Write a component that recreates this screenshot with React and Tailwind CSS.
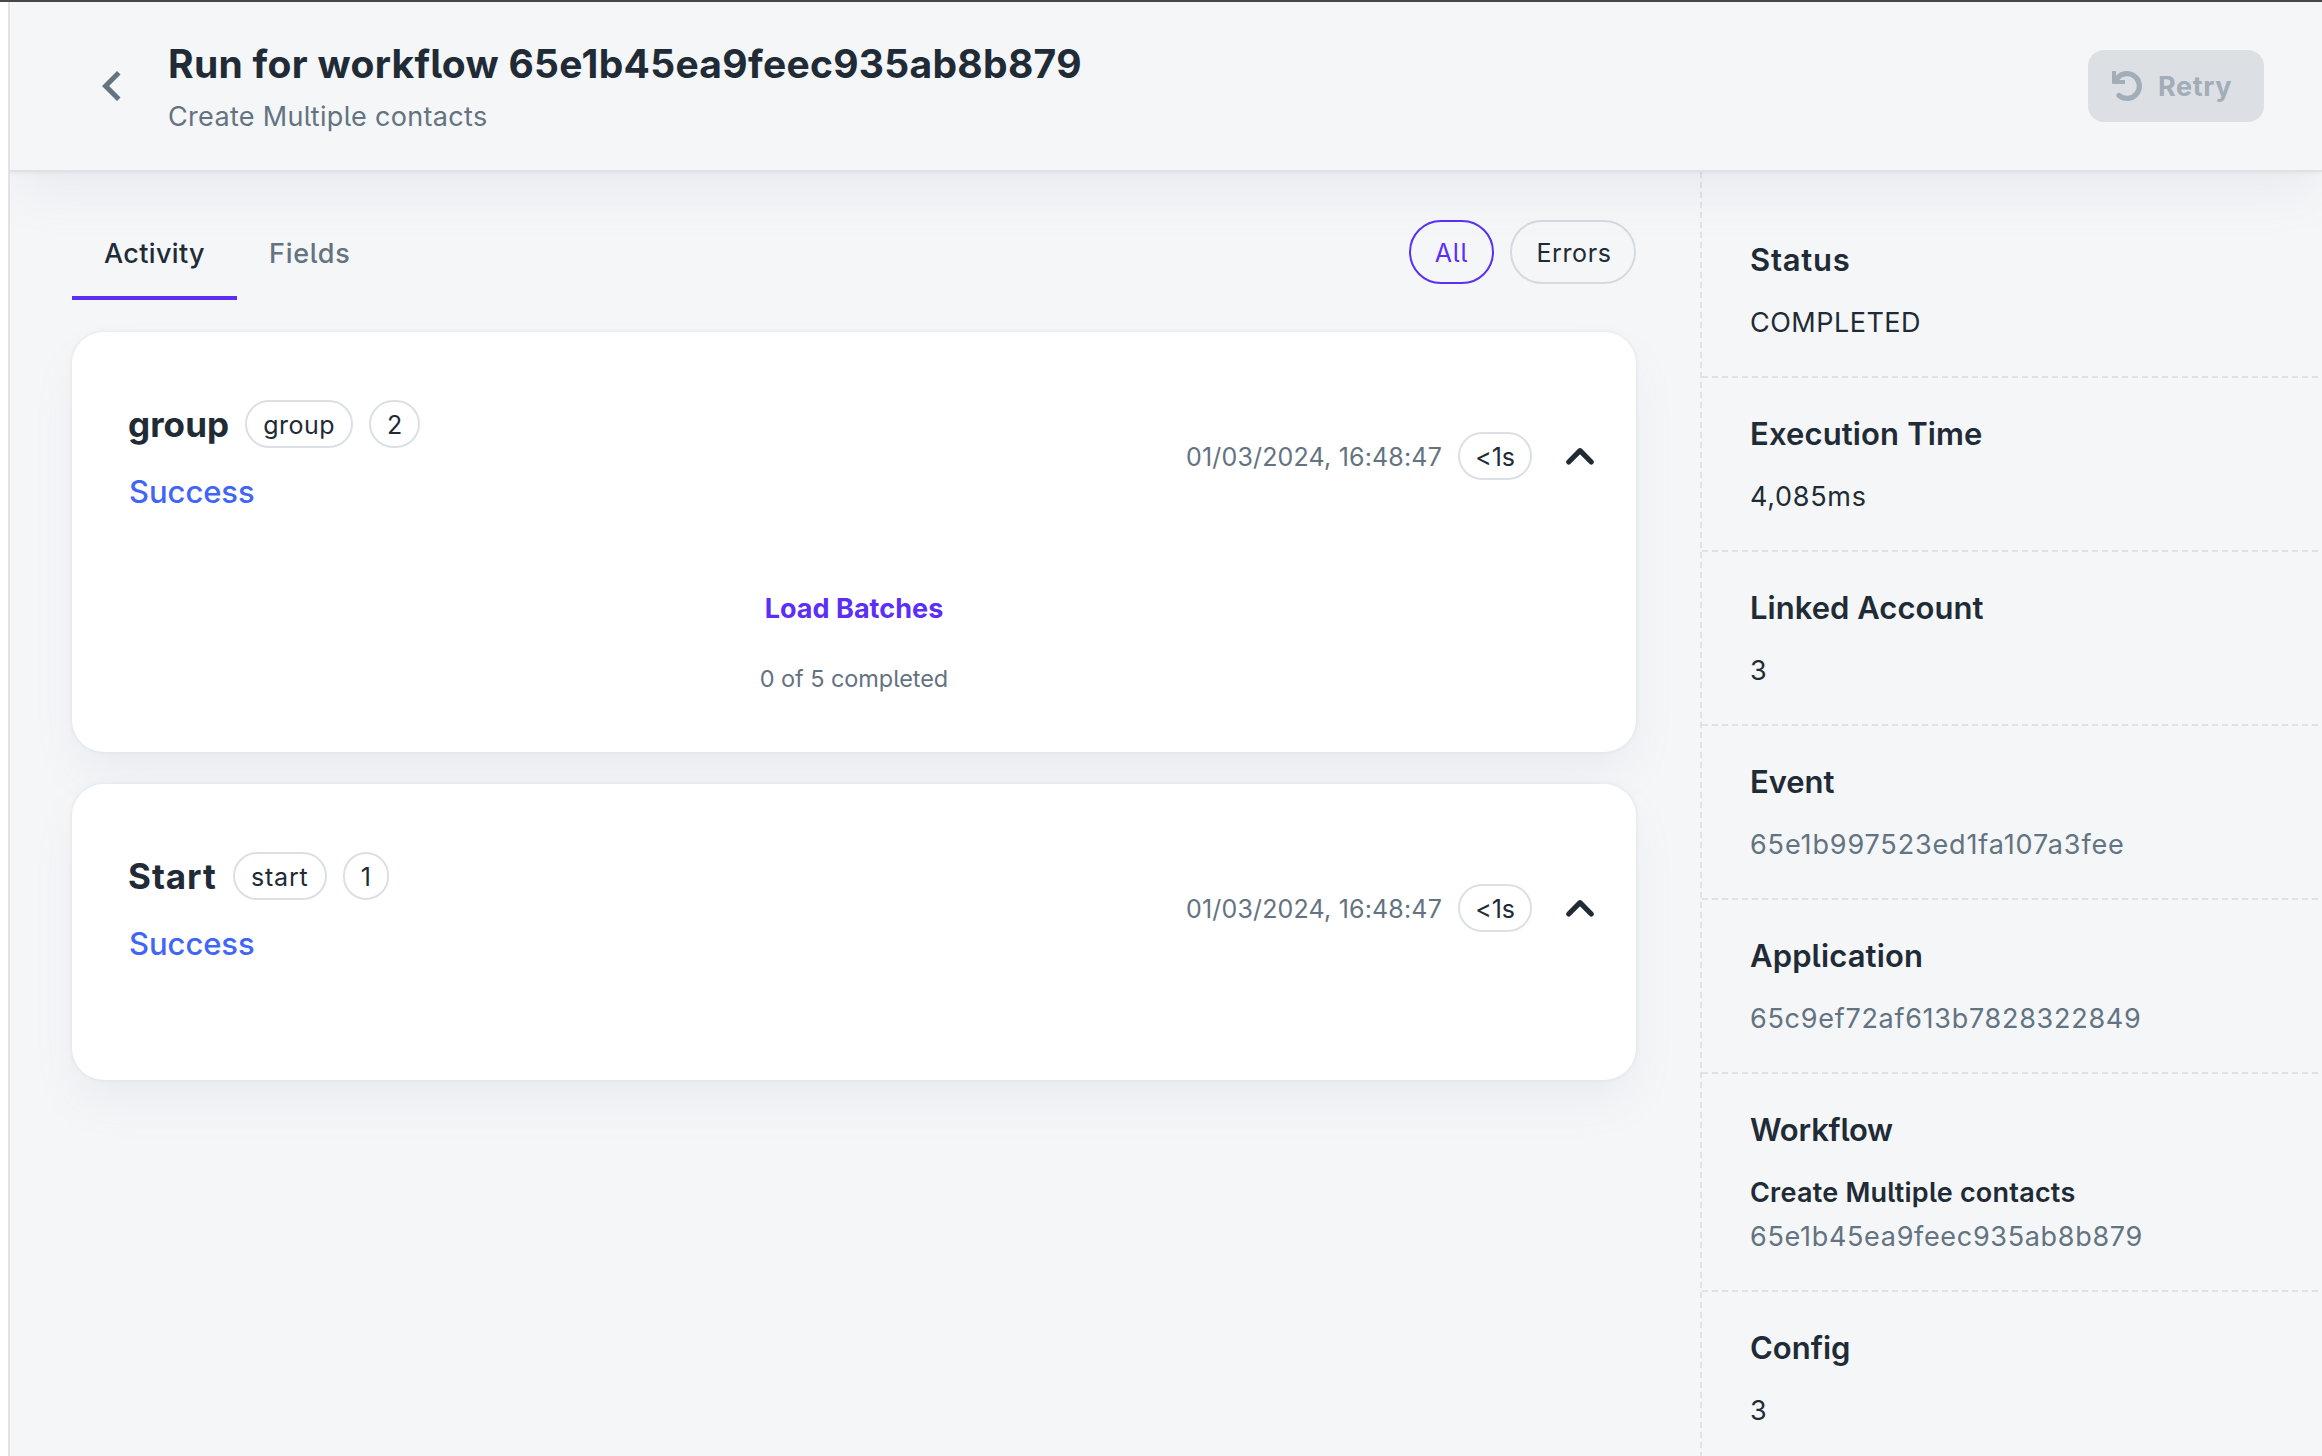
const RUNS = [
  {
    name: "group",
    nameClass: "tracking-[0.05px]",
    type: "group",
    typeClass: "w-[108px] tracking-[0.47px]",
    index: "2",
    indexClass: "w-[51px]",
    cardClass: "h-[420px]",
    batches: true,
  },
  {
    name: "Start",
    nameClass: "tracking-[0.96px]",
    type: "start",
    typeClass: "w-[94px] tracking-[0.79px]",
    index: "1",
    indexClass: "w-[46px]",
    cardClass: "h-[296px]",
    batches: false,
  },
];

const MUTED = "text-[#637381] ";
const DETAILS = [
  { title: "Status", titleClass: "tracking-[0.75px]", lines: [["COMPLETED", "tracking-[0.48px]"]] },
  { title: "Execution Time", titleClass: "tracking-[0.13px]", lines: [["4,085ms", "tracking-[0.7px]"]] },
  { title: "Linked Account", titleClass: "tracking-[0.03px]", lines: [["3", ""]] },
  { title: "Event", titleClass: "tracking-[-0.05px]", lines: [["65e1b997523ed1fa107a3fee", MUTED + "tracking-[0.86px]"]] },
  { title: "Application", titleClass: "tracking-[0.12px]", lines: [["65c9ef72af613b7828322849", MUTED + "tracking-[0.72px]"]] },
  {
    title: "Workflow",
    titleClass: "tracking-[-0.2px]",
    lines: [
      ["Create Multiple contacts", "font-semibold tracking-[0.23px]"],
      ["65e1b45ea9feec935ab8b879", MUTED + "tracking-[0.68px]"],
    ],
  },
  { title: "Config", titleClass: "", lines: [["3", ""]] },
];

function Chip({ className, children }) {
  return (
    <span className={"flex h-12 items-center justify-center rounded-full border-2 border-[#dce0e4] pt-0.5 text-[25px] leading-none " + className}>
      {children}
    </span>
  );
}

function RetryIcon() {
  return (
    <svg className="size-9" viewBox="0 0 36 36" fill="none">
      <path d="M9.5 10A12.4 12.4 0 1 1 11 27.5" stroke="currentColor" strokeWidth="5.2" strokeLinecap="round" />
      <path d="M4.6 3H7.4Q8 3 8 3.6V9L11.5 12H17V16H5Q4 16 4 15V3.6Q4 3 4.6 3Z" fill="currentColor" />
    </svg>
  );
}

function Header() {
  return (
    <header className="relative z-10 flex h-[170px] shrink-0 items-center border-b-2 border-[#dde2e6] bg-[#f4f6f8] pr-[58px] pl-[72px] shadow-[0_24px_48px_-8px_rgba(145,158,171,0.12),0_0_4px_0_rgba(145,158,171,0.2)]">
      <svg className="size-[60px] text-[#637381]" viewBox="0 0 24 24" fill="currentColor">
        <path d="M15.41 7.41 14 6l-6 6 6 6 1.41-1.41L10.83 12z" />
      </svg>
      <div className="ml-[26px] grow">
        <h1 className="text-[39px] leading-[60px] font-bold tracking-[0.3px]">Run for workflow 65e1b45ea9feec935ab8b879</h1>
        <p className="pt-0.5 text-[27px] leading-[42px] tracking-[0.32px] text-[#637381]">Create Multiple contacts</p>
      </div>
      <button className="flex h-[72px] w-44 items-center rounded-2xl bg-[#dce0e5] pl-5 text-[27px] font-bold tracking-[0.6px] text-[#a2adb8]">
        <RetryIcon />
        <span className="ml-3.5 pt-0.5">Retry</span>
      </button>
    </header>
  );
}

function RunCard({ run }) {
  return (
    <section className={"rounded-[32px] bg-white pt-[68px] shadow-[0_0_4px_0_rgba(145,158,171,0.2),0_24px_48px_-8px_rgba(145,158,171,0.12)] " + run.cardClass}>
      <div className="flex h-28 items-center justify-between pr-10 pl-14">
        <div className="h-28">
          <div className="flex h-12 items-center gap-4">
            <h2 className={"text-[35px] leading-[48px] font-bold " + run.nameClass}>{run.name}</h2>
            <Chip className={run.typeClass}>{run.type}</Chip>
            <Chip className={run.indexClass}>{run.index}</Chip>
          </div>
          <p className="mt-5 pl-px text-[31px] leading-[47px] font-medium tracking-[-0.06px] text-[#4065f7]">Success</p>
        </div>
        <div className="flex items-center">
          <span className="pt-1 text-[25px] tracking-[0.17px] text-[#637381]">01/03/2024, 16:48:47</span>
          <Chip className="ml-4 w-[74px] tracking-[-0.11px]">&lt;1s</Chip>
          <svg className="ml-8 h-5 w-8" viewBox="0 0 32 20" fill="none">
            <path d="M4.7 16 16 4.7 27.3 16" stroke="currentColor" strokeWidth="5.2" strokeLinecap="round" strokeLinejoin="round" />
          </svg>
        </div>
      </div>
      {run.batches && (
        <div className="flex flex-col items-center pt-[60px]">
          <button className="h-[72px] pt-0.5 text-[27px] font-bold tracking-[0.03px] text-[#5b2ff5]">Load Batches</button>
          <p className="mt-[13px] text-[23.5px] leading-[44px] tracking-[-0.08px] text-[#637381]">0 of 5 completed</p>
        </div>
      )}
    </section>
  );
}

function Filters() {
  return (
    <div className="flex gap-4 text-[25px]">
      <button className="flex h-16 w-[85px] items-center justify-center rounded-full border-2 border-[#5b2ff5] pt-[3px] tracking-[0.76px] text-[#5b2ff5]">All</button>
      <button className="flex h-16 w-[126px] items-center justify-center rounded-full border-2 border-[#d5dae0] pt-[3px] pl-0.5 tracking-[0.6px]">Errors</button>
    </div>
  );
}

export default function App() {
  return (
    <div className="flex h-[1456px] w-full flex-col overflow-hidden border-t-2 border-[#474747] bg-white font-['Inter','Liberation_Sans',sans-serif] text-[#212b36] [font-feature-settings:'cv05']">
      <div className="ml-2 flex min-h-0 grow flex-col overflow-hidden border-l-2 border-[#dfe3e8] bg-[#f4f6f8]">
        <Header />
        <div className="flex min-h-0 grow">
          <main className="flex w-[1690px] shrink-0 flex-col gap-8 pt-8 pr-16 pl-[62px]">
            <div className="flex h-24 items-center justify-between">
              <nav className="flex h-24 text-[27px] font-medium">
                <button className="w-[165px] border-b-4 border-[#5b2ff5] pt-2 tracking-[0.35px]">Activity</button>
                <button className="border-b-4 border-transparent px-8 pt-2 tracking-[0.75px] text-[#637381]">Fields</button>
              </nav>
              <Filters />
            </div>
            {RUNS.map((run) => (
              <RunCard key={run.name} run={run} />
            ))}
          </main>
          <aside className="h-[1286px] w-[628px] shrink-0 border-l-2 border-dashed border-[#dfe3e8] pt-8">
            {DETAILS.map((item) => (
              <div key={item.title} className="border-b-2 border-dashed border-[#dfe3e8] px-12 pt-8 pb-[31px]">
                <h3 className={"text-[31px] leading-[48px] font-semibold " + item.titleClass}>{item.title}</h3>
                <div className="mt-[17px]">
                  {item.lines.map(([text, cls]) => (
                    <p key={text} className={"text-[27px] leading-[44px] " + cls}>{text}</p>
                  ))}
                </div>
              </div>
            ))}
          </aside>
        </div>
      </div>
    </div>
  );
}
